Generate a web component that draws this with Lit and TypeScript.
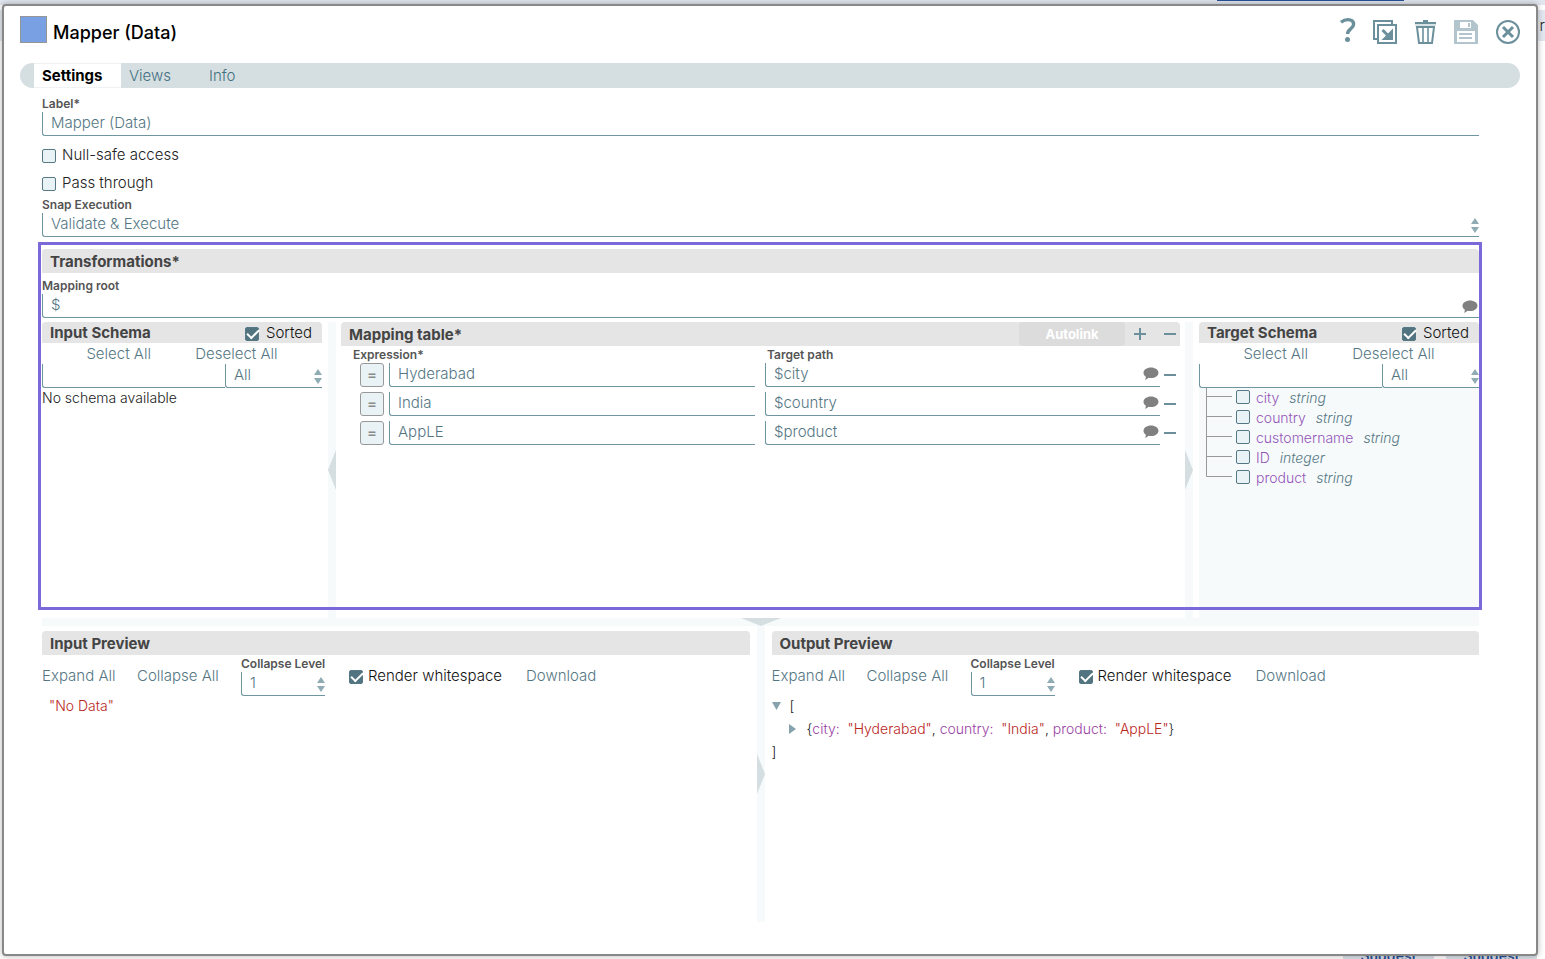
import { LitElement, html, css, svg } from "lit";
import { customElement, state } from "lit/decorators.js";

type Row = { expression: string; target: string };
type Field = { name: string; type: string };

const rows: Row[] = [
  { expression: "Hyderabad", target: "$city" },
  { expression: "India", target: "$country" },
  { expression: "AppLE", target: "$product" },
];

const fields: Field[] = [
  { name: "city", type: "string" },
  { name: "country", type: "string" },
  { name: "customername", type: "string" },
  { name: "ID", type: "integer" },
  { name: "product", type: "string" },
];

const tabs = ["Settings", "Views", "Info"];

const helpIcon = html`<svg width="16" height="24" viewBox="-1 0 16 24" aria-hidden="true">
  <path d="M1 2.300C3 .600 5.300-.400 8-.400c3.600 0 5.600 1.700 5.600 4.600 0 4.800-6 4.600-6 9.800" fill="none" stroke="currentColor" stroke-width="3.400"/>
  <circle cx="7.500" cy="19.500" r="2.500" fill="currentColor"/>
</svg>`;
const exportIcon = html`<svg width="24" height="24" viewBox="0 0 24 24" aria-hidden="true">
  <path d="M4.500 19H1V1h18v3" fill="none" stroke="currentColor" stroke-width="2"/>
  <path d="M5 5h18v18H5z" fill="none" stroke="currentColor" stroke-width="2"/>
  <path d="M9.500 10l7 7" stroke="currentColor" stroke-width="3" fill="none"/>
  <path d="M20 8.500V20H8.500z" fill="currentColor"/>
</svg>`;
const trashIcon = html`<svg width="21" height="24" viewBox="0 0 21 24" aria-hidden="true">
  <path d="M8 0h5v2h8v2H0V2h8z" fill="currentColor"/>
  <path d="M0 5h21" stroke="currentColor" stroke-width="1" opacity="0.500"/>
  <path d="M2 7h17l-2 16H4z" fill="none" stroke="currentColor" stroke-width="2"/>
  <path d="M8 7v15M13 7v15" stroke="currentColor" stroke-width="2" opacity="0.800"/>
</svg>`;
const saveIcon = html`<svg width="24" height="24" viewBox="0 0 24 24" aria-hidden="true">
  <path fill-rule="evenodd" d="M0 0h19l5 5v19H0zM6 2v6h11V2zM3 11v11h18V11z" fill="currentColor"/>
  <path d="M14 3h2v4h-2zM5 13h13v2H5zM5 17h13v2H5z" fill="currentColor"/>
</svg>`;
const closeIcon = html`<svg width="24" height="24" viewBox="0 0 24 24" aria-hidden="true">
  <circle cx="12" cy="12" r="11" fill="none" stroke="currentColor" stroke-width="2"/>
  <path d="M7 7l10 10M17 7L7 17" stroke="currentColor" stroke-width="3"/>
</svg>`;
const commentIcon = html`<svg width="16" height="13" viewBox="0 0 16 13" aria-hidden="true">
  <path d="M8 0.500c4.200 0 7.500 2.300 7.500 5.200S12.200 11 8 11c-.9 0-1.700-.1-2.500-.3C4.500 11.800 3.300 12.500 2 12.700c.6-.9.9-1.900.9-3C1.400 8.700.5 7.300.5 5.700.5 2.800 3.800.5 8 .5z" fill="#808080"/>
</svg>`;
const minusIcon = html`<svg width="12" height="12" viewBox="0 0 12 12" aria-hidden="true"><path d="M0 5h12v2H0z" fill="currentColor"/></svg>`;
const plusIcon = html`<svg width="12" height="12" viewBox="0 0 12 12" aria-hidden="true"><path d="M0 5h5V0h2v5h5v2H7v5H5V7H0z" fill="currentColor"/></svg>`;
const stepper = html`<svg class="stepper" width="8" height="15" viewBox="0 0 8 15" aria-hidden="true">
  <path d="M4 0l4 6H0zM0 9h8l-4 6z" fill="currentColor"/>
</svg>`;

@customElement("app-root")
export class AppRoot extends LitElement {
  static styles = css`
    :host {
      display: grid;
      position: relative;
      min-height: 100vh;
      background: #fff;
      color: #222;
      font: 300 15px/20px Inter, "Liberation Sans", sans-serif;
      overflow: hidden;
    }
    * { box-sizing: border-box; }
    button, input, select { font: inherit; color: inherit; margin: 0; border-radius: 0; }
    button { border: 0; padding: 0; background: none; cursor: pointer; }
    svg { display: block; }
    h1, h2, p, ul { margin: 0; padding: 0; }

    /* Page behind the dialog */
    .canvas {
      grid-area: 1 / 1;
      display: flex;
      flex-direction: column;
      height: 100vh;
      overflow: hidden;
    }
    .strip { height: 5px; background: #e1e6ef; display: flex; justify-content: flex-end; padding-right: 141px; }
    .strip-mark { width: 187px; height: 1px; background: #2a5298; }
    .bar { height: 31px; margin-top: 5px; background: #e4e8f0; text-align: right; line-height: 31px; white-space: nowrap; }
    .suggestions { margin-top: auto; display: flex; justify-content: flex-end; gap: 12px; padding-right: 8px; height: 11px; }
    .suggestions button { width: 91px; height: 28px; background: #dbe2e9; color: #2a5298; font-weight: 600; font-size: 14px; line-height: 16px; padding-bottom: 12px; }

    .dialog {
      grid-area: 1 / 1;
      position: relative;
      margin: 4px 7px 3px 2px;
      border: 2px solid #888;
      border-radius: 4px;
      background: #fff;
      box-shadow: 0 0 6px rgba(0, 0, 0, 0.3);
      padding: 10px 16px 32px;
      display: flex;
      flex-direction: column;
    }
    .title-bar { display: flex; align-items: flex-start; gap: 6px; height: 47px; }
    .swatch { width: 27px; height: 27px; border: 1px solid #969696; background: #7aa0e4; }
    h1 { font-size: 18px; font-weight: 500; line-height: 34px; color: #000; flex: 1; }
    .tools { display: flex; gap: 18px; padding-top: 4px; color: #6b909c; }
    .tools .faded { color: #b2c5cc; }
    .tools button { height: 24px; }
    .tools svg { overflow: visible; }

    .tabs { display: flex; height: 25px; padding-left: 14px; border-radius: 13px; background: #d5dee1; }
    .tabs button { min-width: 80px; padding: 0 8px; text-align: left; color: #417080; }
    .tabs button[aria-selected="true"] { background: #fff; min-width: 87px; color: #000; font-weight: 700; border: solid #eef2f3; border-width: 1px 0; }

    .body { flex: 1; display: flex; flex-direction: column; padding: 8px 41px 0 22px; }
    .caption { display: block; font-size: 12px; font-weight: 600; line-height: 16px; color: #555; white-space: nowrap; }
    .box {
      display: block;
      width: 100%;
      height: 24px;
      padding: 0 8px 2px;
      border: solid #6f95a0;
      border-width: 0 0 1px 1px;
      border-bottom-left-radius: 3px;
      background: transparent;
      color: #557784;
      appearance: none;
      outline: none;
    }
    .box::-webkit-inner-spin-button { appearance: none; }
    .holder { position: relative; min-width: 0; }
    .stepper { position: absolute; right: 0; top: 5px; color: #8fabb4; pointer-events: none; }
    .holder .note { position: absolute; right: 1px; top: 4px; }
    .root-field .holder .note { top: 6px; }

    .check { display: flex; align-items: center; gap: 6px; line-height: 20px; white-space: nowrap; }
    .tick {
      appearance: none;
      flex: none;
      width: 14px;
      height: 14px;
      border: 1px solid #567884;
      border-radius: 2px;
      background: #e9f2f5;
    }
    .check .tick { margin-top: 2px; }
    .tick:checked { background: #527480; }
    .tick:checked::before {
      content: "";
      display: block;
      width: 10px;
      height: 5px;
      margin: 2px 0 0 1px;
      border: solid #fff;
      border-width: 0 0 2px 2px;
      transform: rotate(-45deg);
      transform-origin: 5px 3px;
    }
    .options { display: flex; flex-direction: column; gap: 8px; padding: 9px 0 4px; }

    .bar-title {
      display: flex;
      align-items: center;
      height: 24px;
      padding: 0 8px;
      border-radius: 4px 4px 0 0;
      background: #e5e5e5;
      color: #444;
      font-size: 15px;
      line-height: 24px;
    }
    h2 { font-size: 15px; font-weight: 700; line-height: inherit; flex: 1; white-space: nowrap; padding-top: 2px; }
    .bar-title.short { height: 21px; line-height: 21px; padding-right: 10px; }
    .short h2 { padding-top: 0; }
    .short .check { color: #111; gap: 7px; }

    .transformations { position: relative; margin-top: 12px; }
    .highlight { position: absolute; inset: -7px -3px 8px -4px; border: 3px solid #7b68d9; pointer-events: none; }
    .root-field { padding: 5px 0 4px; }

    .panes { display: grid; grid-template-columns: 280px 8px minmax(0, 1fr) 8px 280px; column-gap: 6px; min-height: 296px; }
    .split-v { display: flex; align-items: center; background: #f6fafb; color: #d5dee1; }
    .split-h { display: flex; justify-content: center; height: 8px; background: #f6fafb; color: #d5dee1; }

    .link { color: #557784; white-space: nowrap; line-height: 21px; text-align: left; }
    .pane { display: flex; flex-direction: column; min-width: 0; }
    .links { display: flex; justify-content: space-evenly; }
    .filter { display: grid; grid-template-columns: minmax(0, 1fr) 97px; }
    .empty { font-size: 14px; }
    .tree { flex: 1; list-style: none; background: #f6fafb; padding-left: 7px; font-size: 14px; }
    .tree li { display: flex; height: 20px; }
    .branch { flex: none; width: 30px; }
    .tree label { display: flex; gap: 6px; }
    .tree .tick { margin-top: 2px; }
    .name { color: #9455b8; }
    .kind { color: #557784; font-style: italic; margin-left: 4px; }

    .autolink { align-self: stretch; width: 106px; border-radius: 4px; background: #dcdcdc; color: #fff; font-size: 13px; font-weight: 700; }
    .sign { color: #6b909c; margin-left: 9px; }
    .sign + .sign { margin-left: 18px; }
    .mapping { margin: 0 -1px; }
    .mapping .bar-title { padding-right: 4px; }
    .mapping table { display: block; }
    .mapping thead, .mapping tbody { display: block; }
    .mapping tr { display: grid; grid-template-columns: minmax(0, 395fr) minmax(0, 405fr) 20px; padding-left: 19px; }
    .mapping tbody tr { margin-bottom: 5px; }
    .mapping th { padding: 0; text-align: left; font-size: 12px; font-weight: 600; line-height: 17px; color: #555; }
    .mapping th:first-child { margin-left: -7px; }
    .mapping th:nth-child(2) { padding-left: 12px; }
    .mapping td { padding: 0; min-width: 0; }
    .mapping td:nth-child(2) { padding-left: 10px; }
    .mapping td:nth-child(3) { padding: 6px 4px 0; }
    .mapping td button { color: #6b909c; display: block; }
    .mapping td .box { padding-right: 24px; }
    .expression { display: grid; grid-template-columns: 24px minmax(0, 1fr); gap: 5px; }
    .mapping .equals { height: 24px; border: 1px solid #999; border-radius: 3px; background: #e9f2f5; color: #8a8a8a; font-weight: 500; }

    .previews { flex: 1; display: grid; grid-template-columns: minmax(0, 1fr) 8px minmax(0, 1fr); column-gap: 7px; min-height: 296px; }
    .preview { padding-top: 5px; }
    .controls { display: grid; grid-template-columns: 95px 104px 84px 201px auto; justify-content: start; height: 39px; color: #111; }
    .controls .link, .controls .check { margin-top: 10px; height: 21px; }
    .controls .check { gap: 5px; padding-left: 24px; }
    .level { padding-top: 1px; }
    .json { font-size: 14px; line-height: 22px; }
    .json .line { display: flex; align-items: center; height: 23px; white-space: pre; }
    .json .value { padding-left: 7px; }
    .json button { color: #86a3ad; }
    .nested { padding-left: 17px; }
    .key { color: #9b3fa5; }
    .text { color: #b9261c; }
  `;

  @state() private tab = "Settings";

  private check(label: string, checked = false) {
    return html`<label class="check"><input class="tick" type="checkbox" .checked=${checked} />${label}</label>`;
  }

  private splitter(points: string) {
    return html`<svg width="8" height="40" viewBox="0 0 8 40" aria-hidden="true">${svg`<polygon points=${points} fill="currentColor"></polygon>`}</svg>`;
  }

  private schema(title: string, content: unknown) {
    return html`<section class="pane">
      <header class="bar-title short"><h2>${title}</h2>${this.check("Sorted", true)}</header>
      <div class="links">
        <button class="link">Select All</button>
        <button class="link">Deselect All</button>
      </div>
      <div class="filter">
        <input class="box" type="text" aria-label="Filter ${title}" />
        <div class="holder">
          <select class="box" aria-label="${title} scope"><option>All</option></select>${stepper}
        </div>
      </div>
      ${content}
    </section>`;
  }

  private tree() {
    return html`<ul class="tree">
      ${fields.map(
        (f, i) => html`<li>
          <svg class="branch" width="30" height="20" viewBox="0 0 30 20" aria-hidden="true">
            <path d=${i === fields.length - 1 ? "M.5 0v8.500H26" : "M.5 0v20M.5 8.500H26"} fill="none" stroke="#999" />
          </svg>
          <label><input class="tick" type="checkbox" /><span class="name">${f.name}</span><span class="kind">${f.type}</span></label>
        </li>`
      )}
    </ul>`;
  }

  private mappingTable() {
    return html`<section class="pane mapping">
      <header class="bar-title">
        <h2>Mapping table*</h2>
        <button class="autolink" disabled>Autolink</button>
        <button class="sign" aria-label="Add row">${plusIcon}</button>
        <button class="sign" aria-label="Remove all rows">${minusIcon}</button>
      </header>
      <table>
        <thead><tr><th>Expression*</th><th>Target path</th></tr></thead>
        <tbody>
          ${rows.map(
            (r) => html`<tr>
              <td><div class="expression">
                <button class="equals" aria-label="Toggle expression">=</button>
                <input class="box" type="text" aria-label="Expression" .value=${r.expression} />
              </div></td>
              <td><div class="holder">
                <input class="box" type="text" aria-label="Target path" .value=${r.target} />
                <button class="note" aria-label="Suggestions">${commentIcon}</button>
              </div></td>
              <td><button aria-label="Remove row">${minusIcon}</button></td>
            </tr>`
          )}
        </tbody>
      </table>
    </section>`;
  }

  private preview(title: string, id: string, content: unknown) {
    return html`<section class="preview">
      <header class="bar-title"><h2>${title}</h2></header>
      <div class="controls">
        <button class="link">Expand All</button>
        <button class="link">Collapse All</button>
        <div class="level">
          <label class="caption" for=${id}>Collapse Level</label>
          <div class="holder"><input class="box" id=${id} type="number" value="1" />${stepper}</div>
        </div>
        ${this.check("Render whitespace", true)}
        <button class="link">Download</button>
      </div>
      ${content}
    </section>`;
  }

  render() {
    const pair = (k: string, v: string) => html`<span class="key">${k}:  </span><span class="text">"${v}"</span>`;
    return html`
      <div class="canvas">
        <div class="strip"><div class="strip-mark"></div></div>
        <div class="bar">r</div>
        <div class="suggestions"><button>Suggest</button><button>Suggest</button></div>
      </div>
      <main class="dialog" role="dialog" aria-labelledby="title">
        <header class="title-bar">
          <div class="swatch"></div>
          <h1 id="title">Mapper (Data)</h1>
          <div class="tools">
            <button aria-label="Help">${helpIcon}</button>
            <button aria-label="Export">${exportIcon}</button>
            <button aria-label="Delete">${trashIcon}</button>
            <button class="faded" aria-label="Save">${saveIcon}</button>
            <button aria-label="Close">${closeIcon}</button>
          </div>
        </header>
        <nav class="tabs" role="tablist">
          ${tabs.map(
            (t) => html`<button role="tab" aria-selected=${t === this.tab ? "true" : "false"} @click=${() => (this.tab = t)}>${t}</button>`
          )}
        </nav>
        <div class="body">
          <label class="caption" for="label">Label*</label>
          <input class="box" id="label" type="text" value="Mapper (Data)" />
          <div class="options">${this.check("Null-safe access")}${this.check("Pass through")}</div>
          <label class="caption" for="execution">Snap Execution</label>
          <div class="holder">
            <select class="box" id="execution"><option>Validate &amp; Execute</option></select>${stepper}
          </div>
          <section class="transformations">
            <header class="bar-title"><h2>Transformations*</h2></header>
            <div class="root-field">
              <label class="caption" for="root">Mapping root</label>
              <div class="holder">
                <input class="box" id="root" type="text" value="$" />
                <button class="note" aria-label="Suggestions">${commentIcon}</button>
              </div>
            </div>
            <div class="panes">
              ${this.schema("Input Schema", html`<p class="empty">No schema available</p>`)}
              <div class="split-v">${this.splitter("8,0 0,20 8,40")}</div>
              ${this.mappingTable()}
              <div class="split-v">${this.splitter("0,0 8,20 0,40")}</div>
              ${this.schema("Target Schema", this.tree())}
            </div>
            <div class="highlight"></div>
          </section>
          <div class="split-h">
            <svg width="40" height="8" viewBox="0 0 40 8" aria-hidden="true"><polygon points="0,0 40,0 20,8" fill="currentColor" /></svg>
          </div>
          <div class="previews">
            ${this.preview("Input Preview", "level-in", html`<div class="json"><div class="line value"><span class="text">"No Data"</span></div></div>`)}
            <div class="split-v">${this.splitter("0,0 8,20 0,40")}</div>
            ${this.preview(
              "Output Preview",
              "level-out",
              html`<div class="json">
                <div class="line"><button aria-label="Collapse"><svg width="18" height="8" viewBox="0 0 18 8"><path d="M0 0h9L4.500 8z" fill="currentColor" /></svg></button>[</div>
                <div class="line nested"><button aria-label="Expand"><svg width="18" height="10" viewBox="0 0 18 10"><path d="M0 0l7 5-7 5z" fill="currentColor" /></svg></button>{${pair("city", "Hyderabad")}, ${pair("country", "India")}, ${pair("product", "AppLE")}}</div>
                <div class="line">]</div>
              </div>`
            )}
          </div>
        </div>
      </main>
    `;
  }
}
